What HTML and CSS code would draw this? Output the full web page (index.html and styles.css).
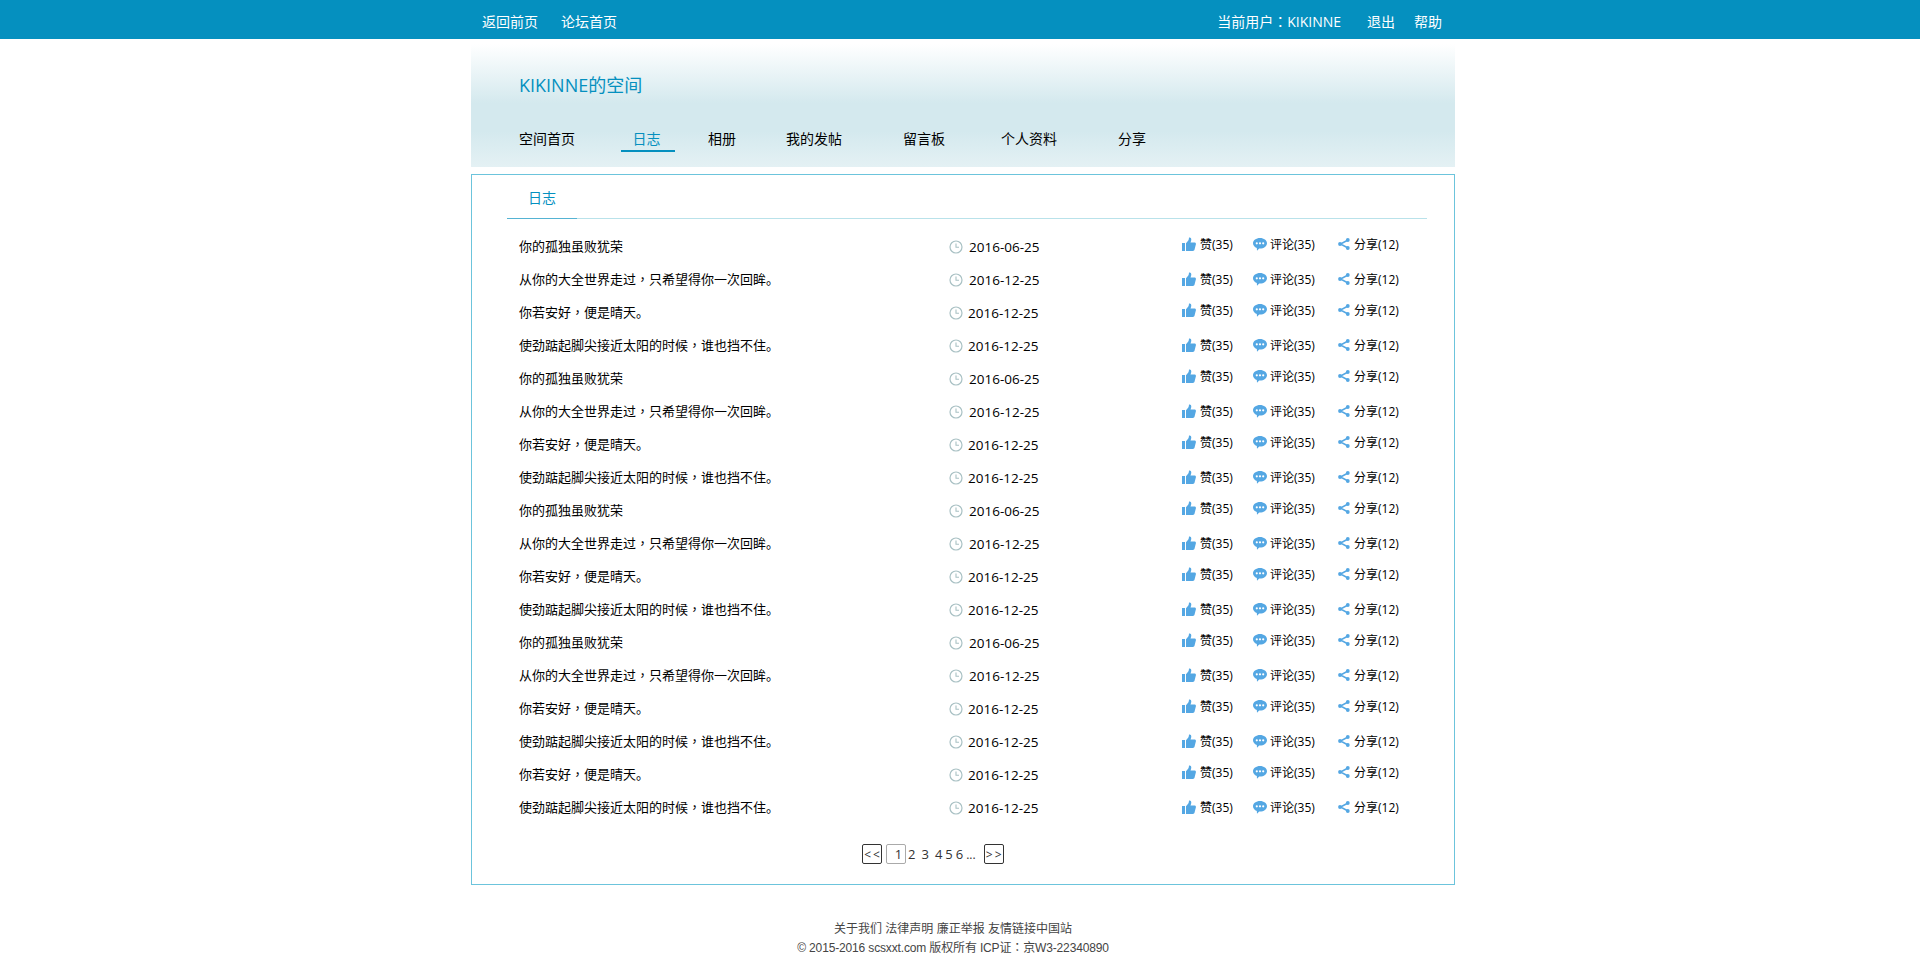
FILE: index.html
```html
<!DOCTYPE html>
<html lang="zh-CN">
<head>
<meta charset="utf-8">
<title>KIKINNE的空间</title>
<link rel="stylesheet" href="styles.css">
</head>
<body>
<svg class="defs" width="0" height="0" aria-hidden="true">
  <symbol id="i-clock" viewBox="0 0 14 14"><circle cx="7" cy="7" r="6" fill="none" stroke="#a9c1c4" stroke-width="1.2"/><path d="M7 3.4V7.300H10" fill="none" stroke="#a9c1c4" stroke-width="1.1"/></symbol>
  <symbol id="i-like" viewBox="0 0 14 14"><path fill="#54a7e3" d="M0 6h3v8H0zM4 6.200 6.300 3.400C6.900 2.600 6.900 1.400 7 .5c1.400-.4 2.300.6 2.300 1.900 0 1-.4 2-.8 3h4c1.100 0 1.700 1 1.400 1.900l-1.400 5.500c-.2.7-.8 1.200-1.500 1.200H4z"/></symbol>
  <symbol id="i-comment" viewBox="0 0 14 14"><path fill="#54a7e3" fill-rule="evenodd" d="M7 1c3.900 0 7 2.300 7 5.300s-3.100 5.300-7 5.300H6.200L4 13.800 3.800 11.100C1.500 10.200 0 8.400 0 6.300 0 3.300 3.100 1 7 1ZM3.800 5.200a1.100 1.100 0 1 0 0 2.200 1.100 1.100 0 0 0 0-2.200ZM7 5.200a1.100 1.100 0 1 0 0 2.200 1.100 1.100 0 0 0 0-2.200ZM10.200 5.200a1.100 1.100 0 1 0 0 2.200 1.100 1.100 0 0 0 0-2.200Z"/></symbol>
  <symbol id="i-share" viewBox="0 0 14 14"><path fill="none" stroke="#54a7e3" stroke-width="1.500" d="M11 3 3.500 7l7.500 4"/><circle cx="10.800" cy="3" r="1.900" fill="#54a7e3"/><circle cx="3" cy="7" r="1.900" fill="#54a7e3"/><circle cx="10.800" cy="11" r="1.900" fill="#54a7e3"/></symbol>
</svg>

<div class="topbar">
  <div class="wrap topbar-in">
    <div class="top-left"><a>返回前页</a><a>论坛首页</a></div>
    <div class="top-right"><span class="user">当前用户<span class="tc">：</span>KIKINNE</span><a class="logout">退出</a><a>帮助</a></div>
  </div>
</div>

<div class="wrap">
  <header class="hero">
    <h1>KIKINNE的空间</h1>
    <nav class="nav">
      <a class="n1">空间首页</a>
      <a class="n2 on">日志</a>
      <a class="n3">相册</a>
      <a class="n4">我的发帖</a>
      <a class="n5">留言板</a>
      <a class="n6">个人资料</a>
      <a>分享</a>
    </nav>
  </header>

  <main class="box">
    <div class="tabs"><span class="tab">日志</span></div>
    <ul class="list" id="list">
      <li class="row"><span class="t">你的孤独虽败犹荣</span><span class="d alt"><svg class="ic-c"><use href="#i-clock"/></svg>2016-06-25</span><span class="a up"><span class="ac a1"><svg class="ic"><use href="#i-like"/></svg>赞(35)</span><span class="ac a2"><svg class="ic"><use href="#i-comment"/></svg>评论(35)</span><span class="ac a3"><svg class="ic"><use href="#i-share"/></svg>分享(12)</span></span></li>
      <li class="row"><span class="t">从你的大全世界走过<span class="tc">，</span>只希望得你一次回眸。</span><span class="d alt"><svg class="ic-c"><use href="#i-clock"/></svg>2016-12-25</span><span class="a"><span class="ac a1"><svg class="ic"><use href="#i-like"/></svg>赞(35)</span><span class="ac a2"><svg class="ic"><use href="#i-comment"/></svg>评论(35)</span><span class="ac a3"><svg class="ic"><use href="#i-share"/></svg>分享(12)</span></span></li>
      <li class="row"><span class="t">你若安好<span class="tc">，</span>便是晴天。</span><span class="d"><svg class="ic-c"><use href="#i-clock"/></svg>2016-12-25</span><span class="a up"><span class="ac a1"><svg class="ic"><use href="#i-like"/></svg>赞(35)</span><span class="ac a2"><svg class="ic"><use href="#i-comment"/></svg>评论(35)</span><span class="ac a3"><svg class="ic"><use href="#i-share"/></svg>分享(12)</span></span></li>
      <li class="row"><span class="t">使劲踮起脚尖接近太阳的时候<span class="tc">，</span>谁也挡不住。</span><span class="d"><svg class="ic-c"><use href="#i-clock"/></svg>2016-12-25</span><span class="a"><span class="ac a1"><svg class="ic"><use href="#i-like"/></svg>赞(35)</span><span class="ac a2"><svg class="ic"><use href="#i-comment"/></svg>评论(35)</span><span class="ac a3"><svg class="ic"><use href="#i-share"/></svg>分享(12)</span></span></li>
      <li class="row"><span class="t">你的孤独虽败犹荣</span><span class="d alt"><svg class="ic-c"><use href="#i-clock"/></svg>2016-06-25</span><span class="a up"><span class="ac a1"><svg class="ic"><use href="#i-like"/></svg>赞(35)</span><span class="ac a2"><svg class="ic"><use href="#i-comment"/></svg>评论(35)</span><span class="ac a3"><svg class="ic"><use href="#i-share"/></svg>分享(12)</span></span></li>
      <li class="row"><span class="t">从你的大全世界走过<span class="tc">，</span>只希望得你一次回眸。</span><span class="d alt"><svg class="ic-c"><use href="#i-clock"/></svg>2016-12-25</span><span class="a"><span class="ac a1"><svg class="ic"><use href="#i-like"/></svg>赞(35)</span><span class="ac a2"><svg class="ic"><use href="#i-comment"/></svg>评论(35)</span><span class="ac a3"><svg class="ic"><use href="#i-share"/></svg>分享(12)</span></span></li>
      <li class="row"><span class="t">你若安好<span class="tc">，</span>便是晴天。</span><span class="d"><svg class="ic-c"><use href="#i-clock"/></svg>2016-12-25</span><span class="a up"><span class="ac a1"><svg class="ic"><use href="#i-like"/></svg>赞(35)</span><span class="ac a2"><svg class="ic"><use href="#i-comment"/></svg>评论(35)</span><span class="ac a3"><svg class="ic"><use href="#i-share"/></svg>分享(12)</span></span></li>
      <li class="row"><span class="t">使劲踮起脚尖接近太阳的时候<span class="tc">，</span>谁也挡不住。</span><span class="d"><svg class="ic-c"><use href="#i-clock"/></svg>2016-12-25</span><span class="a"><span class="ac a1"><svg class="ic"><use href="#i-like"/></svg>赞(35)</span><span class="ac a2"><svg class="ic"><use href="#i-comment"/></svg>评论(35)</span><span class="ac a3"><svg class="ic"><use href="#i-share"/></svg>分享(12)</span></span></li>
      <li class="row"><span class="t">你的孤独虽败犹荣</span><span class="d alt"><svg class="ic-c"><use href="#i-clock"/></svg>2016-06-25</span><span class="a up"><span class="ac a1"><svg class="ic"><use href="#i-like"/></svg>赞(35)</span><span class="ac a2"><svg class="ic"><use href="#i-comment"/></svg>评论(35)</span><span class="ac a3"><svg class="ic"><use href="#i-share"/></svg>分享(12)</span></span></li>
      <li class="row"><span class="t">从你的大全世界走过<span class="tc">，</span>只希望得你一次回眸。</span><span class="d alt"><svg class="ic-c"><use href="#i-clock"/></svg>2016-12-25</span><span class="a"><span class="ac a1"><svg class="ic"><use href="#i-like"/></svg>赞(35)</span><span class="ac a2"><svg class="ic"><use href="#i-comment"/></svg>评论(35)</span><span class="ac a3"><svg class="ic"><use href="#i-share"/></svg>分享(12)</span></span></li>
      <li class="row"><span class="t">你若安好<span class="tc">，</span>便是晴天。</span><span class="d"><svg class="ic-c"><use href="#i-clock"/></svg>2016-12-25</span><span class="a up"><span class="ac a1"><svg class="ic"><use href="#i-like"/></svg>赞(35)</span><span class="ac a2"><svg class="ic"><use href="#i-comment"/></svg>评论(35)</span><span class="ac a3"><svg class="ic"><use href="#i-share"/></svg>分享(12)</span></span></li>
      <li class="row"><span class="t">使劲踮起脚尖接近太阳的时候<span class="tc">，</span>谁也挡不住。</span><span class="d"><svg class="ic-c"><use href="#i-clock"/></svg>2016-12-25</span><span class="a"><span class="ac a1"><svg class="ic"><use href="#i-like"/></svg>赞(35)</span><span class="ac a2"><svg class="ic"><use href="#i-comment"/></svg>评论(35)</span><span class="ac a3"><svg class="ic"><use href="#i-share"/></svg>分享(12)</span></span></li>
      <li class="row"><span class="t">你的孤独虽败犹荣</span><span class="d alt"><svg class="ic-c"><use href="#i-clock"/></svg>2016-06-25</span><span class="a up"><span class="ac a1"><svg class="ic"><use href="#i-like"/></svg>赞(35)</span><span class="ac a2"><svg class="ic"><use href="#i-comment"/></svg>评论(35)</span><span class="ac a3"><svg class="ic"><use href="#i-share"/></svg>分享(12)</span></span></li>
      <li class="row"><span class="t">从你的大全世界走过<span class="tc">，</span>只希望得你一次回眸。</span><span class="d alt"><svg class="ic-c"><use href="#i-clock"/></svg>2016-12-25</span><span class="a"><span class="ac a1"><svg class="ic"><use href="#i-like"/></svg>赞(35)</span><span class="ac a2"><svg class="ic"><use href="#i-comment"/></svg>评论(35)</span><span class="ac a3"><svg class="ic"><use href="#i-share"/></svg>分享(12)</span></span></li>
      <li class="row"><span class="t">你若安好<span class="tc">，</span>便是晴天。</span><span class="d"><svg class="ic-c"><use href="#i-clock"/></svg>2016-12-25</span><span class="a up"><span class="ac a1"><svg class="ic"><use href="#i-like"/></svg>赞(35)</span><span class="ac a2"><svg class="ic"><use href="#i-comment"/></svg>评论(35)</span><span class="ac a3"><svg class="ic"><use href="#i-share"/></svg>分享(12)</span></span></li>
      <li class="row"><span class="t">使劲踮起脚尖接近太阳的时候<span class="tc">，</span>谁也挡不住。</span><span class="d"><svg class="ic-c"><use href="#i-clock"/></svg>2016-12-25</span><span class="a"><span class="ac a1"><svg class="ic"><use href="#i-like"/></svg>赞(35)</span><span class="ac a2"><svg class="ic"><use href="#i-comment"/></svg>评论(35)</span><span class="ac a3"><svg class="ic"><use href="#i-share"/></svg>分享(12)</span></span></li>
      <li class="row"><span class="t">你若安好<span class="tc">，</span>便是晴天。</span><span class="d"><svg class="ic-c"><use href="#i-clock"/></svg>2016-12-25</span><span class="a up"><span class="ac a1"><svg class="ic"><use href="#i-like"/></svg>赞(35)</span><span class="ac a2"><svg class="ic"><use href="#i-comment"/></svg>评论(35)</span><span class="ac a3"><svg class="ic"><use href="#i-share"/></svg>分享(12)</span></span></li>
      <li class="row"><span class="t">使劲踮起脚尖接近太阳的时候<span class="tc">，</span>谁也挡不住。</span><span class="d"><svg class="ic-c"><use href="#i-clock"/></svg>2016-12-25</span><span class="a"><span class="ac a1"><svg class="ic"><use href="#i-like"/></svg>赞(35)</span><span class="ac a2"><svg class="ic"><use href="#i-comment"/></svg>评论(35)</span><span class="ac a3"><svg class="ic"><use href="#i-share"/></svg>分享(12)</span></span></li>
    </ul>
    <div class="pager">
      <span class="pg nav-b">&lt;&lt;</span>
      <span class="pg cur">1</span>
      <span class="pn p2">2</span>
      <span class="pn p3">3</span>
      <span class="pn p4">4</span>
      <span class="pn p5">5</span>
      <span class="pn p6">6</span>
      <span class="pn dots">...</span>
      <span class="pg nav-b">&gt;&gt;</span>
    </div>
  </main>

  <footer class="foot">
    <p>关于我们 法律声明 廉正举报 友情链接中国站</p>
    <p class="foot-2">© 2015-2016 scsxxt.com 版权所有 ICP证<span class="tc">：</span>京W3-22340890</p>
  </footer>
</div>
</body>
</html>
```
FILE: styles.css
```css
* { box-sizing: border-box; }
html, body { margin: 0; padding: 0; background: #fff; }
body { font-family: "Open Sans", "Noto Sans CJK SC", sans-serif; font-size: 14px; color: #000; }
p, h1, ul { margin: 0; padding: 0; }
ul { list-style: none; }
.defs { position: absolute; }
.wrap { width: 984px; margin: 0 0 0 471px; }
.tc { font-family: "Noto Sans CJK TC", sans-serif; font-feature-settings: "locl" 0; }

.topbar { height: 39px; background: #0590bf; color: #fff; }
.topbar-in { display: flex; justify-content: space-between; align-items: center; height: 39px; padding: 2px 13px 0 11px; }
.top-left { display: flex; gap: 23px; }
.top-right { display: flex; }
.user { margin-right: 26px; }
.logout { margin-right: 19px; }

.hero { height: 128px; background: linear-gradient(#fff 0%, #fff 4%, #d4e9ee 50%, #d4e9ee 72%, #e4f1f4 100%); padding: 0 0 0 48px; }
.hero h1 { font-size: 18px; font-weight: 400; color: #0590bf; line-height: 24px; padding-top: 34px; box-sizing: content-box; height: 24px; }
.nav { display: flex; margin-top: 20px; height: 40px; line-height: 43px; }
.nav a { display: block; height: 35px; }
.n1 { margin-right: 46px; }
.n2 { width: 54px; padding-right: 3px; text-align: center; margin-right: 33px; }
.n3 { margin-right: 50px; }
.n4 { margin-right: 61px; }
.n5 { margin-right: 56px; }
.n6 { margin-right: 61px; }
.nav .on { color: #0590bf; border-bottom: 2px solid #0590bf; }

.box { margin-top: 7px; height: 711px; border: 1px solid #6cc4dc; padding: 0 27px 0 35px; }
.tabs { height: 44px; border-bottom: 1px solid #b9e2ea; }
.tab { display: block; width: 70px; height: 44px; line-height: 46px; text-align: center; color: #0590bf; border-bottom: 1px solid #55b3d3; }

.list { padding-top: 10px; }
.row { display: flex; height: 33px; align-items: center; padding-left: 12px; font-size: 13px; }
.t { width: 430px; flex: none; }
.d { width: 233px; flex: none; display: flex; align-items: center; font-size: 13.5px; position: relative; top: 1px; }
.d svg { margin-right: 5px; }
.d.alt svg { margin-right: 6px; }
.ic-c { width: 14px; height: 14px; flex: none; }
.a { display: flex; font-size: 12px; }
.a.up { position: relative; top: -2px; }
.ac { display: flex; align-items: center; }
.a1 { width: 71px; }
.a2 { width: 84px; }
.ic { width: 14px; height: 14px; margin-right: 4px; flex: none; }
.a2 .ic, .a3 .ic { margin-right: 3px; }

.pager { display: flex; align-items: center; height: 22px; margin-top: 20px; margin-left: 355px; font-size: 13px; color: #333; }
.pg { width: 20px; height: 20px; border: 1px solid #333; border-radius: 2px; display: flex; align-items: center; justify-content: center; font-size: 12px; letter-spacing: 2px; padding-left: 2px; }
.cur { border-color: #aaa; margin-left: 4px; margin-right: 2px; font-size: 13px; letter-spacing: 0; padding-left: 5px; }
.pn { margin-right: 5px; }
.p2 { margin-right: 6px; }
.p3 { margin-right: 6px; }
.p4 { margin-right: 3px; }
.p5 { margin-right: 3px; }
.p6 { margin-right: 3px; }
.dots { font-size: 12px; margin-right: 8px; }

.foot { margin-top: 35px; padding-right: 20px; text-align: center; font-family: "Liberation Sans", "Noto Sans CJK SC", sans-serif; font-size: 12px; line-height: 18px; color: #444; }
.foot .foot-2 { letter-spacing: -.15px; }
```
